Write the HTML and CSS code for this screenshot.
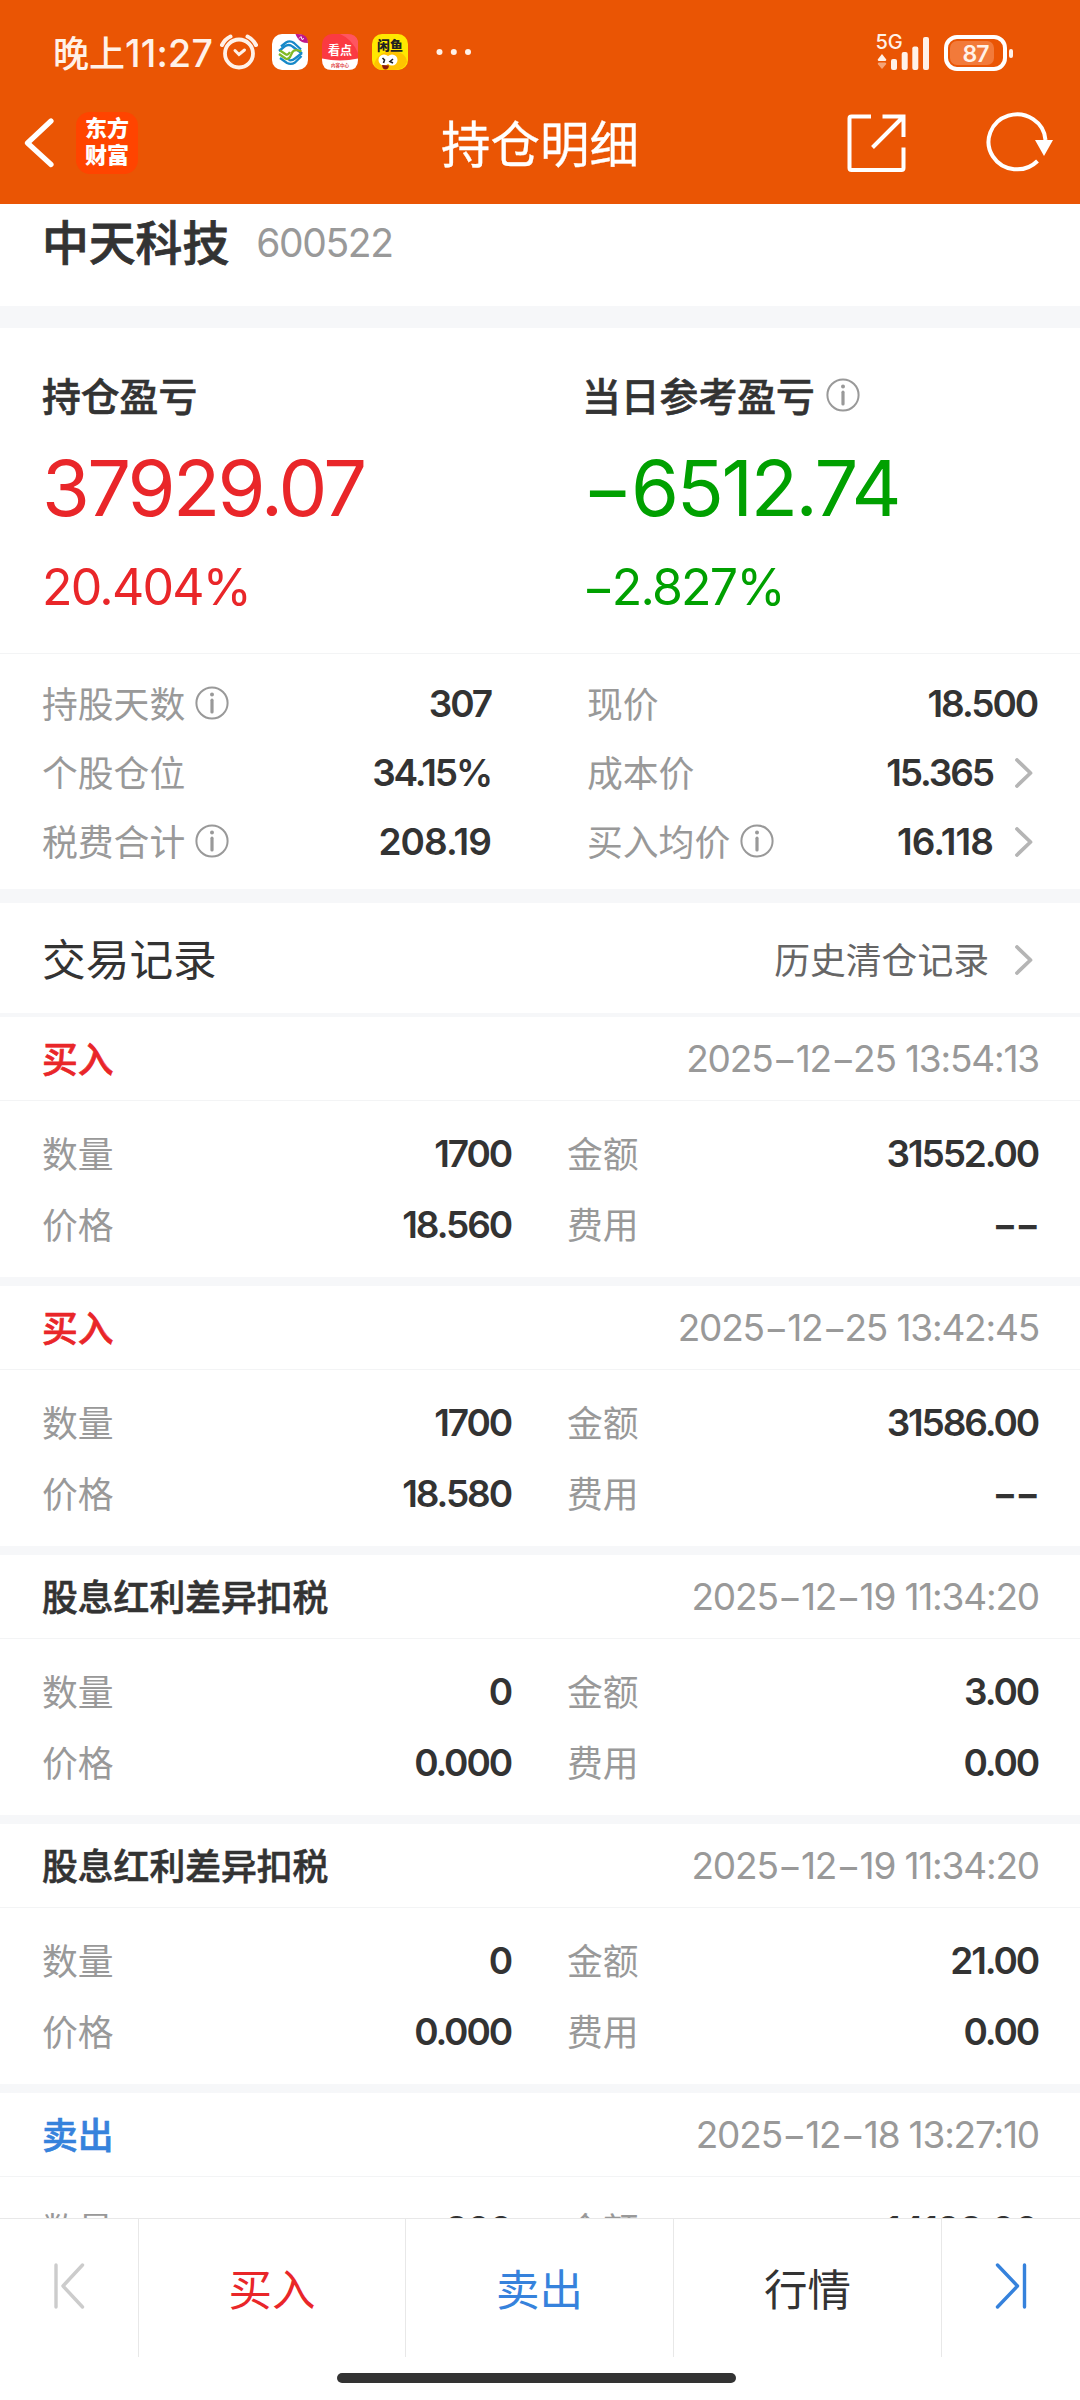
FILE: index.html
```html
<!DOCTYPE html>
<html lang="zh-CN">
<head>
<meta charset="utf-8">
<title>持仓明细</title>
<link rel="stylesheet" href="styles.css">
</head>
<body>
<svg width="0" height="0" class="defs">
  <symbol id="info" viewBox="0 0 34 34"><circle cx="17" cy="17" r="15.6" fill="none" stroke="#999" stroke-width="2"/><circle cx="17" cy="8.6" r="2" fill="#999"/><path d="M17 14.2V26" stroke="#999" stroke-width="3.2" stroke-linecap="round"/></symbol>
  <symbol id="chev" viewBox="0 0 18 30"><path d="M2 2L15.500 15L2 28" fill="none" stroke="#b5b5b5" stroke-width="3.800" stroke-linecap="round" stroke-linejoin="round"/></symbol>
</svg>
<div class="screen">
  <header class="top">
    <div class="status">
      <span class="clock">晚上<span class="clock-num">11:27</span></span>
      <svg class="status-icons" width="260" height="40" viewBox="215 32 260 40">
        <g fill="none" stroke="#fff1e8" stroke-linecap="round">
          <circle cx="239" cy="53.500" r="14" stroke-width="3.800"/>
          <path d="M235 50.500L239 54.500L244.500 50" stroke-width="3"/>
          <path d="M222 45Q225 39 230.500 36.500M256 45Q253 39 247.500 36.500" stroke-width="4"/>
        </g>
        <rect x="272" y="34" width="36" height="36" rx="10" fill="#fff"/>
        <path d="M295.500 34h2.500q10 0 10 9q-4 0-6-1q-5-3-6.500-8z" fill="#c0178c"/>
        <path d="M299 38.500l2-2 1 3 2-1" fill="none" stroke="#fff" stroke-width="1"/>
        <g fill="none" stroke-width="2.300" stroke-linejoin="round">
          <path d="M281 46.500L286 42.500Q290 40 294 43L301 49.500" stroke="#1688c8"/>
          <path d="M279 51L284.500 46.500Q289 43.500 292.500 46.500L302 53.500" stroke="#1688c8"/>
          <path d="M279 54L285.500 58.500Q288 60 290 57L292.500 52Q295 48.500 301.500 51.500" stroke="#7fb927"/>
          <path d="M280 50.500L286 54.500Q288 55.500 290 52" stroke="#7fb927"/>
          <path d="M301.500 56L295 62.500Q291 65 287 63L280 58" stroke="#1688c8"/>
          <path d="M302 53L295 58.500Q292 61 288.500 60" stroke="#1688c8"/>
        </g>
        <rect x="322" y="34" width="36" height="36" rx="10" fill="#fb3a42"/>
        <path d="M340 34h8q8 0 10 7v12q-6-14-18-19z" fill="#ff5560"/>
        <path d="M322 58.500q18 4 36 0v1.500q0 10-10 10h-16q-10 0-10-10z" fill="#fff"/>
        <text x="340" y="54.500" class="kandian">看点</text>
        <text x="340" y="67" class="kandian-sub">内容中心</text>
        <rect x="372" y="34" width="36" height="36" rx="10" fill="#ffe800"/>
        <path d="M374 64Q378 52 392 51Q406 52 407 62Q404 70 394 70H382Q376 70 374 64Z" fill="#ffc400"/>
        <text x="390" y="50" class="xianyu">闲鱼</text>
        <circle cx="384" cy="60" r="5.500" fill="#fff"/><circle cx="392" cy="60" r="5.500" fill="#fff"/>
        <path d="M382.500 58l2 2-1 3M393 59l-3 2.500 3 1.500" stroke="#222" stroke-width="1.600" fill="none"/>
        <path d="M382 65l7 .5q-.5 4-3.500 4t-3.500-4.500z" fill="#8b1a0c"/>
        <g fill="#fff1e8"><circle cx="439.500" cy="52" r="3"/><circle cx="453.800" cy="52" r="3"/><circle cx="468" cy="52" r="3"/></g>
      </svg>
      <svg class="signal" width="144" height="42" viewBox="872 30 144 42">
        <text x="875.500" y="48" class="five-g">5G</text>
        <g fill="#fff1e8">
          <path d="M882 53l4.300 5.500q0 1.500-1.300 1.500h-6q-1.300 0-1.300-1.500z"/>
          <path d="M882 68l4.300-5q0-1.500-1.300-1.500h-6q-1.300 0-1.300 1.500z" opacity=".5"/>
          <rect x="891" y="58" width="6" height="11" rx="2"/><rect x="901.700" y="51" width="6" height="18" rx="2"/><rect x="912.300" y="45.500" width="6" height="23.500" rx="2"/><rect x="923" y="36" width="6" height="33" rx="2"/>
          <rect x="1009" y="48" width="4" height="9" rx="2"/>
        </g>
        <rect x="946" y="36" width="59" height="32" rx="11" fill="none" stroke="#fff" stroke-width="4"/>
        <rect x="950" y="40" width="44" height="24" rx="7" fill="#f27a3a"/>
        <text x="975.500" y="60.700" class="batt">87</text>
      </svg>
    </div>
    <nav class="nav">
      <svg class="back" width="30" height="50" viewBox="24 117 30 50"><path d="M51 120L27.500 142L51 163.500" fill="none" stroke="#fff" stroke-width="5.200" stroke-linecap="round" stroke-linejoin="round"/></svg>
      <div class="logo">东方<br>财富</div>
      <h1>持仓明细</h1>
      <svg class="share" width="62" height="62" viewBox="845 110 62 62"><g fill="none" stroke="#fff" stroke-width="4"><path d="M871 114.500H851.500Q849.500 114.500 849.500 116.500V166Q849.500 168 851.500 168H901.500Q903.500 168 903.500 166V145.500"/><path d="M882.500 114.500H903.500V135M903 115L872.500 145.500"/></g></svg>
      <svg class="refresh" width="68" height="64" viewBox="985 110 68 64"><path d="M1044.500 139A28.500 27.500 0 1 0 1036.500 160" fill="none" stroke="#fff" stroke-width="4"/><path d="M1034 139H1052L1043 155Z" fill="#fff"/></svg>
    </nav>
  </header>

  <main>
    <section class="stock"><h2>中天科技</h2><span class="num code">600522</span></section>

    <section class="profit">
      <div class="pcol red"><h3>持仓盈亏</h3><div class="num big">37929.07</div><div class="num pct">20.404%</div></div>
      <div class="pcol green"><h3>当日参考盈亏<svg class="info"><use href="#info"/></svg></h3><div class="num big big-neg">−6512.74</div><div class="num pct">−2.827%</div></div>
    </section>

    <section class="stats">
      <div class="scol">
        <div class="row"><span class="label">持股天数<svg class="info"><use href="#info"/></svg></span><b class="num">307</b></div>
        <div class="row"><span class="label">个股仓位</span><b class="num">34.15%</b></div>
        <div class="row"><span class="label">税费合计<svg class="info"><use href="#info"/></svg></span><b class="num loose">208.19</b></div>
      </div>
      <div class="scol">
        <div class="row"><span class="label">现价</span><b class="num">18.500</b></div>
        <div class="row"><span class="label">成本价</span><b class="num">15.365</b><svg class="chev"><use href="#chev"/></svg></div>
        <div class="row"><span class="label">买入均价<svg class="info"><use href="#info"/></svg></span><b class="num loose">16.118</b><svg class="chev"><use href="#chev"/></svg></div>
      </div>
    </section>

    <section class="records-head"><h2>交易记录</h2><span class="history">历史清仓记录</span><svg class="chev"><use href="#chev"/></svg></section>

    <article class="record">
      <div class="rhead"><strong class="red">买入</strong><time class="num">2025−12−25 13:54:13</time></div>
      <div class="rbody">
        <div class="row"><span class="label">数量</span><b class="num">1700</b></div><div class="row"><span class="label">金额</span><b class="num">31552.00</b></div>
        <div class="row"><span class="label">价格</span><b class="num">18.560</b></div><div class="row"><span class="label">费用</span><b class="num">−−</b></div>
      </div>
    </article>
    <article class="record">
      <div class="rhead"><strong class="red">买入</strong><time class="num">2025−12−25 13:42:45</time></div>
      <div class="rbody">
        <div class="row"><span class="label">数量</span><b class="num">1700</b></div><div class="row"><span class="label">金额</span><b class="num">31586.00</b></div>
        <div class="row"><span class="label">价格</span><b class="num">18.580</b></div><div class="row"><span class="label">费用</span><b class="num">−−</b></div>
      </div>
    </article>
    <article class="record">
      <div class="rhead"><strong>股息红利差异扣税</strong><time class="num">2025−12−19 11:34:20</time></div>
      <div class="rbody">
        <div class="row"><span class="label">数量</span><b class="num">0</b></div><div class="row"><span class="label">金额</span><b class="num">3.00</b></div>
        <div class="row"><span class="label">价格</span><b class="num">0.000</b></div><div class="row"><span class="label">费用</span><b class="num">0.00</b></div>
      </div>
    </article>
    <article class="record">
      <div class="rhead"><strong>股息红利差异扣税</strong><time class="num">2025−12−19 11:34:20</time></div>
      <div class="rbody">
        <div class="row"><span class="label">数量</span><b class="num">0</b></div><div class="row"><span class="label">金额</span><b class="num">21.00</b></div>
        <div class="row"><span class="label">价格</span><b class="num">0.000</b></div><div class="row"><span class="label">费用</span><b class="num">0.00</b></div>
      </div>
    </article>
    <article class="record">
      <div class="rhead"><strong class="blue">卖出</strong><time class="num">2025−12−18 13:27:10</time></div>
      <div class="rbody">
        <div class="row"><span class="label">数量</span><b class="num">800</b></div><div class="row"><span class="label">金额</span><b class="num loose">14128.00</b></div>
      </div>
    </article>
  </main>

  <footer>
    <div class="tabs">
      <span><svg class="first" width="34" height="48" viewBox="0 0 34 48"><path d="M4 3V45M30.500 3L11 24L30.500 45" fill="none" stroke="#ccc" stroke-width="3.400" stroke-linecap="round" stroke-linejoin="round"/></svg></span>
      <span class="red">买入</span>
      <span class="blue">卖出</span>
      <span>行情</span>
      <span><svg class="last" width="34" height="48" viewBox="0 0 34 48"><path d="M30.500 3V45M3.500 3L23.500 24L3.500 45" fill="none" stroke="#3682dc" stroke-width="3.400" stroke-linecap="round" stroke-linejoin="round"/></svg></span>
    </div>
    <div class="home"></div>
  </footer>
</div>
</body>
</html>
```
FILE: styles.css
```css
* { box-sizing: border-box; margin: 0; padding: 0; }
body { font-family: "Noto Sans CJK SC", sans-serif; color: #333; background: #fff; }
svg { display: block; flex: none; }
.defs { position: absolute; }
.screen { width: 1080px; height: 2400px; display: flex; flex-direction: column; overflow: hidden; }
.num { font-family: Inter, sans-serif; letter-spacing: -0.035em; white-space: pre; }
.red { color: #e92629; }
.blue { color: #3682dc; }

.top { height: 204px; flex: none; background: #ea5504; color: #fff; }
.status { height: 104px; display: flex; align-items: center; padding: 0 64px 0 53px; }
.clock { width: 162px; font-size: 36px; line-height: 44px; color: #fff1e8; white-space: nowrap; font-weight: 500; }
.clock-num { font-family: Inter, sans-serif; font-size: 37.500px; font-weight: 500; letter-spacing: 0.2px; }
.signal { margin-left: auto; }
.kandian { font: 700 12px "Noto Sans CJK SC", sans-serif; fill: #fff; text-anchor: middle; }
.kandian-sub { font: 700 4.500px "Noto Sans CJK SC", sans-serif; fill: #e0474c; text-anchor: middle; }
.xianyu { font: 900 13px "Noto Sans CJK SC", sans-serif; fill: #222; text-anchor: middle; }
.five-g { font: 500 20px Inter, sans-serif; fill: #fff1e8; }
.batt { font: 600 23px Inter, sans-serif; fill: #fff1e8; text-anchor: middle; letter-spacing: -1px; }
.nav { height: 78px; display: flex; align-items: center; padding: 0 26px 0 24px; }
.logo { width: 62px; height: 62px; margin-left: 22px; padding-top: 1px; border-radius: 14px; background: #ff4400; text-align: center; font-size: 22px; line-height: 27px; font-weight: 900; }
.nav h1 { flex: 1; margin: -2px 0 0 303px; font-size: 49.500px; line-height: 70px; font-weight: 400; -webkit-text-stroke: 0.3px; }
.share { margin-right: 79px; }

.stock { height: 124px; display: flex; padding: 3px 42px 0; border-bottom: 22px solid #f6f7f9; }
.stock h2 { margin-top: -2px; font-size: 46.800px; line-height: 70px; font-weight: 500; -webkit-text-stroke: 0.8px; }
.code { font-size: 39px; line-height: 71px; color: #999; margin-left: 27px; }

.profit { height: 326px; display: grid; grid-template-columns: 540px 1fr; padding: 41px 0 0 42px; border-bottom: 1px solid #f3f4f5; }
.pcol h3 { display: flex; align-items: center; font-size: 38.800px; line-height: 48px; height: 50px; font-weight: 500; color: #333; -webkit-text-stroke: 0.6px; }
.info { width: 34px; height: 34px; margin-left: 11px; margin-top: 2px; }
.green { color: #00a000; }
.big { font-size: 77.500px; line-height: 100px; margin-top: 19px; }
.big-neg { letter-spacing: -0.03em; }
.pct { font-size: 50px; line-height: 60px; margin-top: 19px; }

.stats { height: 249px; display: grid; grid-template-columns: 449px 450px; justify-content: space-between; padding: 15px 43px 0 42px; border-bottom: 14px solid #f6f7f9; }
.stats .row { height: 69px; }
.stats .info { margin-left: 10px; }
.row { display: flex; align-items: center; font-size: 35.800px; }
.row b { font-size: 37px; font-weight: 600; letter-spacing: -0.057em; margin-left: auto; margin-top: -1px; }
.row b.loose { letter-spacing: -0.025em; }
.label { display: flex; align-items: center; color: #999; margin-top: -3px; }
.chev { width: 18px; height: 30px; }
.row .chev { margin: 0 4px 0 22px; }

.records-head { height: 114px; display: flex; align-items: center; padding: 0 47px 0 42px; border-bottom: 4px solid #f6f7f9; }
.records-head h2 { font-size: 43.700px; font-weight: 400; margin-top: -3px; }
.records-head .chev { margin-top: 4px; }
.history { margin-left: auto; margin-right: 26px; font-size: 35.800px; color: #666; }

.record { height: 269px; border-bottom: 9px solid #f6f7f9; }
.rhead { height: 84px; display: flex; align-items: center; justify-content: space-between; padding: 0 41px 0 42px; border-bottom: 1px solid #f3f4f5; font-size: 35.800px; }
.rhead strong { font-weight: 500; margin-top: -4px; -webkit-text-stroke: 0.6px; }
.rhead time { color: #999; font-size: 37px; letter-spacing: -0.032em; }
.rbody { display: grid; grid-template-columns: 469px 471px; column-gap: 56px; grid-auto-rows: 71px; padding: 17px 42px 0 42px; }

main { height: 2014px; flex: none; overflow: hidden; }
footer { height: 182px; flex: none; background: #fff; border-top: 1px solid #e8e8e8; }
.tabs { height: 138px; display: grid; grid-template-columns: 139px 267px 268px 268px 1fr; font-size: 43.500px; }
.tabs > span { display: flex; align-items: center; justify-content: center; border-right: 1px solid #e8e8e8; padding-bottom: 2px; }
.tabs > span:last-child { border-right: 0; }
.first, .last { margin-top: -3px; }
.home { width: 399px; height: 10px; margin: 16px 0 0 337px; border-radius: 5px; background: #333; }
```
